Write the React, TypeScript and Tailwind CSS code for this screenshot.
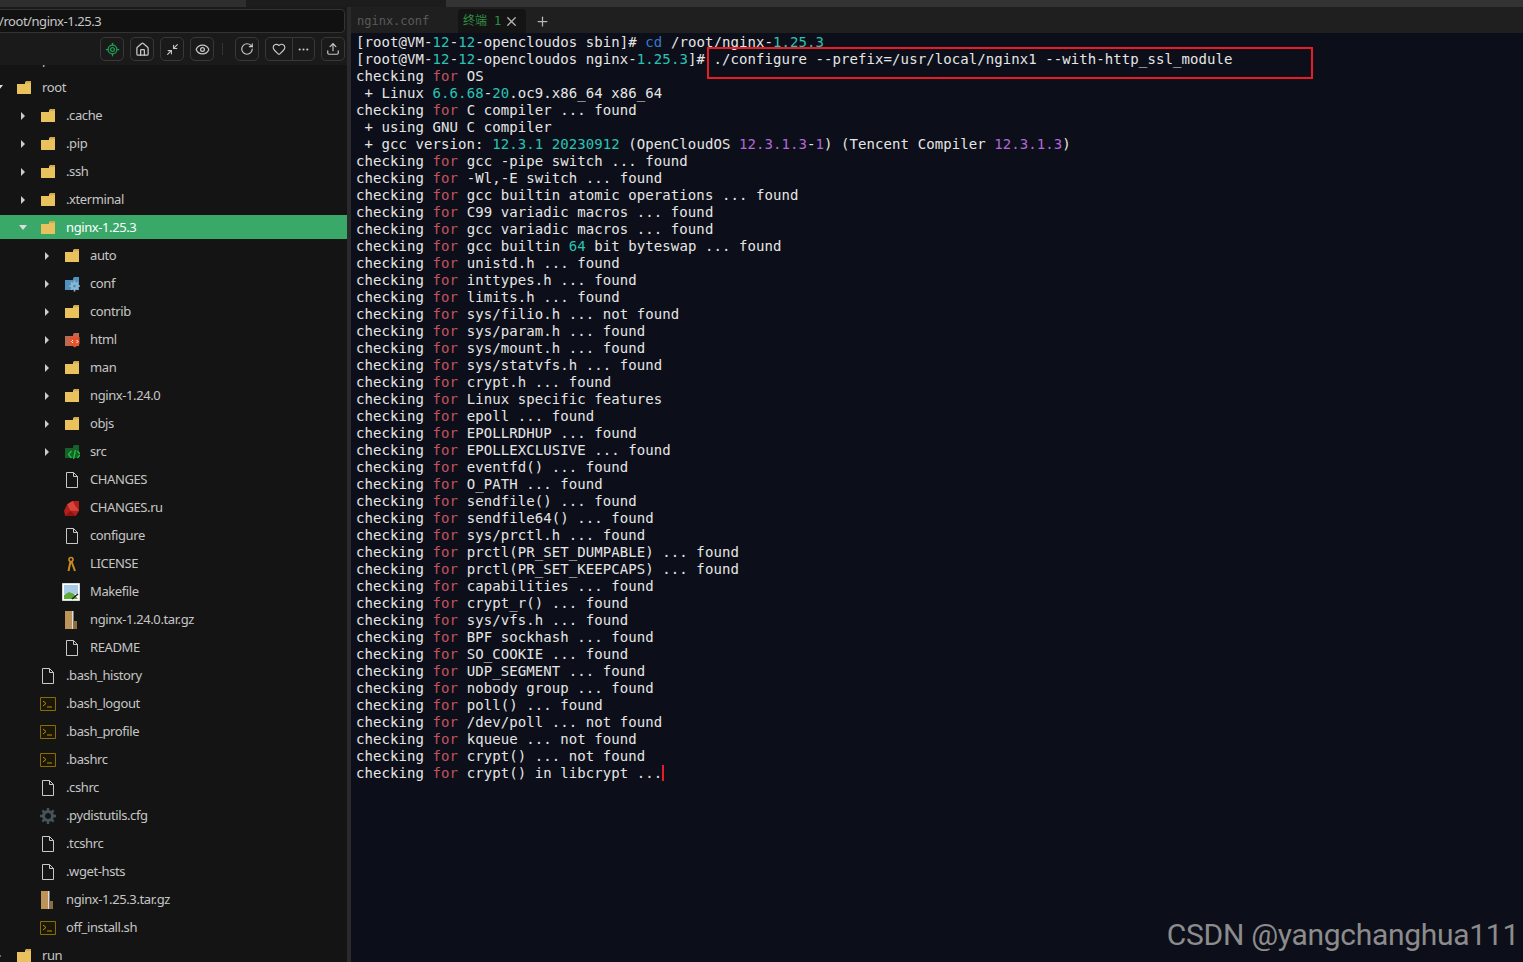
import { Ellipsis, Eye, Heart, Home, LocateFixed, Minimize2, Plus, RotateCw, Upload, X } from "lucide-react";

type Kind = "none" | "folder" | "conf" | "html" | "src" | "file" | "ruby" | "key" | "image" | "zip" | "shell" | "gear";

interface Row {
    name: string;
    level: 0 | 1 | 2;
    kind: Kind;
    open?: boolean;
    selected?: boolean;
}

// tree rows, top to bottom (the first one is scrolled away under the toolbar)
const rows: Row[] = [
    { name: "proc", level: 0, kind: "none" },
    { name: "root", level: 0, kind: "folder", open: true },
    { name: ".cache", level: 1, kind: "folder" },
    { name: ".pip", level: 1, kind: "folder" },
    { name: ".ssh", level: 1, kind: "folder" },
    { name: ".xterminal", level: 1, kind: "folder" },
    { name: "nginx-1.25.3", level: 1, kind: "folder", open: true, selected: true },
    { name: "auto", level: 2, kind: "folder" },
    { name: "conf", level: 2, kind: "conf" },
    { name: "contrib", level: 2, kind: "folder" },
    { name: "html", level: 2, kind: "html" },
    { name: "man", level: 2, kind: "folder" },
    { name: "nginx-1.24.0", level: 2, kind: "folder" },
    { name: "objs", level: 2, kind: "folder" },
    { name: "src", level: 2, kind: "src" },
    { name: "CHANGES", level: 2, kind: "file" },
    { name: "CHANGES.ru", level: 2, kind: "ruby" },
    { name: "configure", level: 2, kind: "file" },
    { name: "LICENSE", level: 2, kind: "key" },
    { name: "Makefile", level: 2, kind: "image" },
    { name: "nginx-1.24.0.tar.gz", level: 2, kind: "zip" },
    { name: "README", level: 2, kind: "file" },
    { name: ".bash_history", level: 1, kind: "file" },
    { name: ".bash_logout", level: 1, kind: "shell" },
    { name: ".bash_profile", level: 1, kind: "shell" },
    { name: ".bashrc", level: 1, kind: "shell" },
    { name: ".cshrc", level: 1, kind: "file" },
    { name: ".pydistutils.cfg", level: 1, kind: "gear" },
    { name: ".tcshrc", level: 1, kind: "file" },
    { name: ".wget-hsts", level: 1, kind: "file" },
    { name: "nginx-1.25.3.tar.gz", level: 1, kind: "zip" },
    { name: "off_install.sh", level: 1, kind: "shell" },
    { name: "run", level: 0, kind: "folder" },
];

const indent = ["ml-[-6px]", "ml-[18px]", "ml-[42px]"];

function FolderShape({ fill }: { fill: string }) {
    return <path d="M1 4h8V2.500L10 1h5v13H1z" fill={fill} />;
}

function TreeIcon({ kind }: { kind: Kind }) {
    switch (kind) {
        case "none":
            return null;
        case "folder":
            return (
                <svg width="16" height="16" viewBox="0 0 16 16">
                    <FolderShape fill="#e9c25e" />
                    <path d="M10 1h5v2h-5z" fill="#d0a94a" />
                </svg>
            );
        case "conf":
            return (
                <svg width="16" height="16" viewBox="0 0 16 16">
                    <FolderShape fill="#4e93bf" />
                    <path d="M10.500 4.500v11M5 10h11M6.800 6.300l7.400 7.400M14.200 6.300l-7.400 7.400" stroke="#8fb6cf" strokeWidth="1.600" />
                    <circle cx="10.500" cy="10" r="3.800" fill="#8fb6cf" />
                    <circle cx="10.500" cy="10" r="1.500" fill="#4e93bf" />
                </svg>
            );
        case "html":
            return (
                <svg width="16" height="16" viewBox="0 0 16 16">
                    <FolderShape fill="#bb6a4f" />
                    <path d="M6 5h9.500v7l-4.750 3.500L6 12z" fill="#e8522a" />
                    <path d="M9 8l-1.500 1.500L9 11M12.500 8L14 9.500 12.500 11" stroke="#fff" fill="none" strokeWidth="1" />
                </svg>
            );
        case "src":
            return (
                <svg width="16" height="16" viewBox="0 0 16 16">
                    <FolderShape fill="#17602c" />
                    <path d="M7.500 7l-3 3.500 3 3.500M13.500 7l3 3.500-3 3.500M11.500 6l-2 9" stroke="#1fc23a" fill="none" strokeWidth="1.300" />
                </svg>
            );
        case "file":
            return (
                <svg width="16" height="16" viewBox="0 0 16 16">
                    <path d="M2.500.500h7l4 4v11h-11zM9.500.500v4h4" fill="none" stroke="#c8c8c8" strokeWidth="1" />
                </svg>
            );
        case "ruby":
            return (
                <svg width="17" height="17" viewBox="0 0 16 16" className="-ml-[1px]">
                    <path d="M1 10l3-6 5-3h6v9l-3 5H2z" fill="#b3201c" />
                    <path d="M4 4l5-3 3 5-5 4zM7 10l5-4 3 4z" fill="#d9443c" />
                    <path d="M2 15l5-5 5 5z" fill="#8e1512" />
                </svg>
            );
        case "key":
            return (
                <svg width="16" height="16" viewBox="0 0 16 16">
                    <circle cx="7" cy="3.500" r="2" fill="none" stroke="#c98a1f" strokeWidth="1.600" />
                    <path d="M6.500 5.500L4.500 15M7.500 5.500L11 15" stroke="#c98a1f" strokeWidth="2" />
                </svg>
            );
        case "image":
            return (
                <svg width="18" height="18" viewBox="0 0 18 18" className="-ml-[2px]">
                    <path d="M.500.500h17v17H.500z" fill="#fff" stroke="#d8d8d8" />
                    <path d="M2 2h14v9H2z" fill="#a9cbe6" />
                    <path d="M2 16v-4l5-3 5 2 4 5z" fill="#62a93c" />
                    <path d="M10 16l6-5" stroke="#222" strokeWidth="1.600" />
                </svg>
            );
        case "zip":
            return (
                <svg width="16" height="18" viewBox="0 0 16 18">
                    <path d="M1 0h7v18H1z" fill="#bd935a" />
                    <path d="M8 0h1.500v18H8z" fill="#ddd" />
                    <path d="M9.500 10H13v8H9.500z" fill="#8d6c40" />
                </svg>
            );
        case "shell":
            return (
                <svg width="16" height="14" viewBox="0 0 16 14">
                    <path d="M.500.500h15v13H.500z" fill="#1a1708" stroke="#8a6d00" />
                    <path d="M3 4l3 2.500L3 9M7 10h5" stroke="#b59000" fill="none" />
                </svg>
            );
        case "gear":
            return (
                <svg width="16" height="16" viewBox="0 0 16 16">
                    <path d="M8 0v16M0 8h16M2.300 2.300l11.400 11.400M13.700 2.300L2.300 13.700" stroke="#44545e" strokeWidth="2.400" />
                    <circle cx="8" cy="8" r="4.500" fill="#141414" stroke="#44545e" strokeWidth="3" />
                </svg>
            );
    }
}

function TreeRow({ row }: { row: Row }) {
    const hasArrow = row.kind === "folder" || row.kind === "conf" || row.kind === "html" || row.kind === "src";
    return (
        <div className={`h-[28px] flex items-center ${row.selected ? "text-white" : "text-[#c6c6c6]"} relative`}>
            {row.selected && <div className="absolute left-0 right-0 top-[1px] bottom-[3px] bg-[#39a869]" />}
            <div className={`relative flex items-center ${indent[row.level]}`}>
                <div className="w-[10px] flex justify-center">
                    {hasArrow && (
                        row.open ? (
                            <svg width="8" height="6" viewBox="0 0 8 6"><path d="M0 0h8L4 5z" fill="#ddd" /></svg>
                        ) : (
                            <svg width="6" height="8" viewBox="0 0 6 8"><path d="M1 0v8l4-4z" fill="#ccc" /></svg>
                        )
                    )}
                </div>
                <div className="w-[18px] ml-[12px] h-[18px] flex items-center justify-start"><TreeIcon kind={row.kind} /></div>
                <span className="ml-[8px] text-[13px] tracking-[-0.4px] whitespace-nowrap">{row.name}</span>
            </div>
        </div>
    );
}

const btn = "h-[24px] flex items-center justify-center border border-[#383838] rounded-[5px] text-[#c8c8c8]";

function Sidebar() {
    return (
        <div className="w-[347px] shrink-0 bg-[#141414] flex flex-col overflow-hidden">
            <div className="h-[26px] pt-[2px] pr-[2px] bg-[#1a1a1a]">
                <div className="h-[24px] -ml-[4px] border border-[#333] rounded-[4px] bg-[#111] text-[#c6c6c6] text-[13px] tracking-[-0.45px] leading-[22px] pl-[2px]">/root/nginx-1.25.3</div>
            </div>
            <div className="h-[32px] shrink-0 flex items-center justify-end gap-[6px] pr-[2px] bg-[#1a1a1a] relative z-10">
                <div className={`${btn} w-[24px]`}><LocateFixed size={15} color="#1f9d55" /></div>
                <div className={`${btn} w-[24px]`}><Home size={15} /></div>
                <div className={`${btn} w-[24px]`}><Minimize2 size={13} /></div>
                <div className={`${btn} w-[24px]`}><Eye size={15} /></div>
                <div className="w-px h-[12px] bg-[#333] ml-[2px] mr-[6px]" />
                <div className={`${btn} w-[24px]`}><RotateCw size={14} /></div>
                <div className="flex">
                    <div className={`${btn} w-[28px] rounded-r-none`}><Heart size={14} /></div>
                    <div className={`${btn} w-[22px] rounded-l-none border-l-0`}><Ellipsis size={13} /></div>
                </div>
                <div className={`${btn} w-[24px]`}><Upload size={14} /></div>
            </div>
            <div className="flex-1 overflow-hidden">
                <div className="-mt-[19px]">
                    {rows.map((r) => <TreeRow key={r.name} row={r} />)}
                </div>
            </div>
        </div>
    );
}

// c = teal number, p = purple number, b = blue command word, r = keyword
type Seg = [string, ("c" | "p" | "b" | "r")?];

const tone = {
    c: "text-[#2ac3b4]",
    p: "text-[#b268d8]",
    b: "text-[#3b78c9]",
    r: "text-[#c2545e]",
};

const special: Seg[][] = [
    [["[root@VM-"], ["12", "c"], ["-"], ["12", "c"], ["-opencloudos sbin]# "], ["cd", "b"], [" /root/nginx-"], ["1.25.3", "c"]],
    [["[root@VM-"], ["12", "c"], ["-"], ["12", "c"], ["-opencloudos nginx-"], ["1.25.3", "c"], ["]# ./configure --prefix=/usr/local/nginx1 --with-http_ssl_module"]],
    [["checking "], ["for", "r"], [" OS"]],
    [[" + Linux "], ["6.6.68", "c"], ["-"], ["20", "c"], [".oc9.x86_64 x86_64"]],
    [["checking "], ["for", "r"], [" C compiler ... found"]],
    [[" + using GNU C compiler"]],
    [[" + gcc version: "], ["12.3.1", "c"], [" "], ["20230912", "c"], [" (OpenCloudOS "], ["12.3.1.3", "p"], ["-"], ["1", "p"], [") (Tencent Compiler "], ["12.3.1.3", "p"], [")"]],
];

const checks = [
    "gcc -pipe switch ... found",
    "-Wl,-E switch ... found",
    "gcc builtin atomic operations ... found",
    "C99 variadic macros ... found",
    "gcc variadic macros ... found",
    "gcc builtin 64 bit byteswap ... found",
    "unistd.h ... found",
    "inttypes.h ... found",
    "limits.h ... found",
    "sys/filio.h ... not found",
    "sys/param.h ... found",
    "sys/mount.h ... found",
    "sys/statvfs.h ... found",
    "crypt.h ... found",
    "Linux specific features",
    "epoll ... found",
    "EPOLLRDHUP ... found",
    "EPOLLEXCLUSIVE ... found",
    "eventfd() ... found",
    "O_PATH ... found",
    "sendfile() ... found",
    "sendfile64() ... found",
    "sys/prctl.h ... found",
    "prctl(PR_SET_DUMPABLE) ... found",
    "prctl(PR_SET_KEEPCAPS) ... found",
    "capabilities ... found",
    "crypt_r() ... found",
    "sys/vfs.h ... found",
    "BPF sockhash ... found",
    "SO_COOKIE ... found",
    "UDP_SEGMENT ... found",
    "nobody group ... found",
    "poll() ... found",
    "/dev/poll ... not found",
    "kqueue ... not found",
    "crypt() ... not found",
    "crypt() in libcrypt ...",
];

function checkLine(text: string): Seg[] {
    if (text.includes("builtin 64")) {
        const [a, b] = text.split("64");
        return [["checking "], ["for", "r"], [" " + a], ["64", "c"], [b]];
    }
    return [["checking "], ["for", "r"], [" " + text]];
}

const lines: Seg[][] = [...special, ...checks.map(checkLine)];

function Terminal() {
    return (
        <div className="relative flex-1 bg-[#0c0f19] overflow-hidden pl-[5px] pt-[1px] font-['DejaVu_Sans_Mono','Liberation_Mono',monospace] text-[14px] tracking-[0.08px] leading-[17px] text-[#e6e6e6] whitespace-pre">
            {lines.map((line, i) => (
                <div key={i} className="h-[17px]">
                    {line.map(([t, c], j) => <span key={j} className={c ? tone[c] : ""}>{t}</span>)}
                    {i === lines.length - 1 && <span className="inline-block w-[2px] h-[16px] bg-[#e81c24] align-[-3px]" />}
                </div>
            ))}
            {/* annotation box */}
            <div className="absolute left-[356px] top-[14px] w-[606px] h-[32px] border-2 border-[#e81c24]" />
            <div className="absolute right-[4px] bottom-[9px] font-['Roboto',sans-serif] text-[30px] leading-[36px] tracking-[-0.3px] text-[#8c8c8c]">CSDN @yangchanghua111</div>
        </div>
    );
}

function Tabs() {
    return (
        <div className="h-[26px] shrink-0 bg-[#1f1f1f] flex items-end text-[12px] font-['DejaVu_Sans_Mono','Noto_Sans_CJK_SC',monospace]">
            <div className="w-[107px] pl-[6px] h-[23px] leading-[23px] text-[#5a5a5a]">nginx.conf</div>
            <div className="w-[68px] h-[24px] bg-[#141414] rounded-t-[4px] flex items-center pl-[5px] text-[#2f8f46]">
                <span>终端</span>
                <span className="ml-[7px]">1</span>
                <X size={15} color="#b5b5b5" className="ml-[3px]" />
            </div>
            <div className="h-[23px] flex items-center ml-[9px]">
                <Plus size={15} color="#b5b5b5" />
            </div>
        </div>
    );
}

export default function App() {
    return (
        <div className="w-[1523px] h-[962px] overflow-hidden flex flex-col bg-[#141414] font-['Noto_Sans',sans-serif]">
            <div className="h-[7px] shrink-0 flex">
                <div className="w-[246px] bg-[#2e2e2e]" />
                <div className="w-[200px] bg-[#1c1c1c]" />
                <div className="flex-1 bg-[#333]" />
            </div>
            <div className="flex-1 flex min-h-0">
                <Sidebar />
                <div className="w-[4px] shrink-0 bg-[#2a2a2a]" />
                <div className="flex-1 flex flex-col min-w-0">
                    <Tabs />
                    <Terminal />
                </div>
            </div>
        </div>
    );
}
